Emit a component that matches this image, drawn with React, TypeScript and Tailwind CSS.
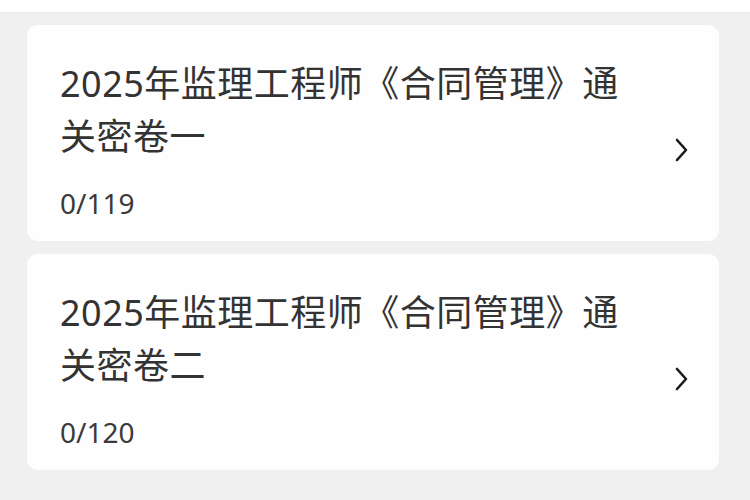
const papers = [
  { title: '2025年监理工程师《合同管理》通关密卷一', progress: '0/119' },
  { title: '2025年监理工程师《合同管理》通关密卷二', progress: '0/120' },
]

function Chevron() {
  return (
    <svg width="16" height="26" viewBox="0 0 16 26" fill="none" className="mt-[34px] shrink-0">
      <path d="M4 3 L13 13 L4 23" stroke="#1a1a1a" strokeWidth="2.6" strokeLinecap="round" strokeLinejoin="round" />
    </svg>
  )
}

export default function App() {
  return (
    <div
      className="flex h-[500px] w-[750px] flex-col overflow-hidden bg-[#f0f0f1]"
      style={{ fontFamily: '"Noto Sans", "Noto Sans CJK SC", sans-serif' }}
    >
      {/* top bar */}
      <div className="h-[13px] shrink-0 border-b border-[#ebebeb] bg-white" />

      <div className="flex flex-col gap-[13px] pl-[27px] pr-[31px] pt-[12px]">
        {papers.map(p => (
          <div key={p.progress} className="flex items-center rounded-[11px] bg-[#fefefe] pl-[33px] pr-[30px]">
            <div className="flex-1 pt-[32px] pb-[18px]">
              <div className="w-[580px] text-[36px] leading-[53px] tracking-[0.5px] text-[#333333]">{p.title}</div>
              <div className="mt-[20px] text-[28px] leading-[40px] text-[#3a3a3a]">{p.progress}</div>
            </div>
            <Chevron />
          </div>
        ))}
      </div>
    </div>
  )
}
